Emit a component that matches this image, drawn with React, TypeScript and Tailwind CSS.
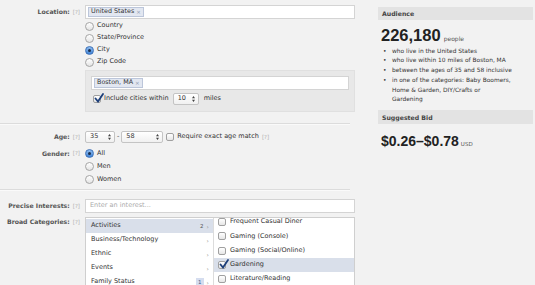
import React from "react";

const Help = () => <span className="ml-[3px] text-[5.5px] font-normal text-[#b0b0b0]">[?]</span>;

function Label({ text, className = "" }: { text: string; className?: string }) {
  return (
    <div className={`w-[85px] shrink-0 pr-[5px] flex justify-end items-center text-[6.2px] font-bold text-[#555] ${className}`}>
      {text}
      <Help />
    </div>
  );
}

function Radio({ checked = false }: { checked?: boolean }) {
  if (checked) {
    return (
      <span className="w-[9px] h-[9px] rounded-full border border-[#3f72b8] bg-linear-to-b from-[#8fbdf0] to-[#3f83d6] flex items-center justify-center shrink-0">
        <span className="w-[3px] h-[3px] rounded-full bg-[#1c2f4d]" />
      </span>
    );
  }
  return <span className="w-[9px] h-[9px] rounded-full border border-[#a5a5a5] bg-linear-to-b from-white to-[#e4e4e4] shrink-0" />;
}

function Checkbox({ checked = false }: { checked?: boolean }) {
  return (
    <span className="relative inline-block w-[8px] h-[8px] rounded-[2px] border border-[#a0a0a0] bg-linear-to-b from-white to-[#e6e6e6] shrink-0">
      {checked && (
        <svg viewBox="0 0 10 10" className="absolute -top-[3px] left-0 w-[10px] h-[10px]">
          <path d="M1.5 5.5 L4 8.5 L9 1" fill="none" stroke="#1d3f7a" strokeWidth="1.8" strokeLinecap="round" />
        </svg>
      )}
    </span>
  );
}

function Select({ value, width }: { value: string; width: string }) {
  return (
    <span className={`${width} h-[12px] rounded-[2px] border border-[#c4c4c4] bg-linear-to-b from-white to-[#f0f0f0] flex items-center justify-between pl-[4px] pr-[3px] text-[6.5px] text-[#333]`}>
      {value}
      <svg viewBox="0 0 4 8" className="w-[3px] h-[6px]">
        <path d="M0 3 L2 0 L4 3 Z M0 5 L2 8 L4 5 Z" fill="#444" />
      </svg>
    </span>
  );
}

function Token({ text }: { text: string }) {
  return (
    <span className="h-[10px] px-[2px] flex items-center bg-[#e2e7f1] border border-[#bcc6da] text-[6.4px] text-[#333]">
      {text}
      <span className="ml-[2px] text-[#8894ad] text-[5.5px]">×</span>
    </span>
  );
}

function Separator() {
  return (
    <div className="w-[350px]">
      <div className="h-px bg-[#dcdcdc]" />
      <div className="h-px bg-[#fafafa]" />
    </div>
  );
}

const categories = [
  { name: "Activities", count: "2", active: true },
  { name: "Business/Technology" },
  { name: "Ethnic" },
  { name: "Events" },
  { name: "Family Status", count: "1", badge: true },
];

const interests = [
  { name: "Frequent Casual Diner" },
  { name: "Gaming (Console)" },
  { name: "Gaming (Social/Online)" },
  { name: "Gardening", checked: true },
  { name: "Literature/Reading" },
];

const audience = [
  "who live in the United States",
  "who live within 10 miles of Boston, MA",
  "between the ages of 35 and 58 inclusive",
  "in one of the categories: Baby Boomers,\nHome & Garden, DIY/Crafts or\nGardening",
];

export default function App() {
  return (
    <div className="w-[535px] h-[285px] overflow-hidden bg-[#f2f2f2] flex font-['DejaVu_Sans',sans-serif] text-[6.5px] text-[#333]">
      <div className="w-[378px] shrink-0 pt-[5px]">
        {/* location */}
        <div className="flex">
          <Label text="Location:" className="h-[14px]" />
          <div className="w-[270px]">
            <div className="h-[14px] bg-white border border-[#d4d4d4] flex items-center px-[2px]">
              <Token text="United States" />
            </div>
            <div className="mt-[1px]">
              {["Country", "State/Province", "City", "Zip Code"].map((r) => (
                <div key={r} className="h-[12px] flex items-center gap-[3px]">
                  <Radio checked={r === "City"} />
                  {r}
                </div>
              ))}
            </div>
            <div className="mt-[2px] h-[42px] bg-[#e8e8e8] border border-[#e0e0e0] px-[5px] pt-[5px]">
              <div className="h-[14px] bg-white border border-[#d4d4d4] flex items-center px-[2px]">
                <Token text="Boston, MA" />
              </div>
              <div className="mt-[3px] h-[12px] flex items-center gap-[3px] pl-[2px]">
                <Checkbox checked />
                <span className="mr-[1px]">Include cities within</span>
                <Select value="10" width="w-[26px]" />
                <span className="ml-[2px]">miles</span>
              </div>
            </div>
          </div>
        </div>

        <div className="mt-[11px]">
          <Separator />
        </div>

        {/* age & gender */}
        <div className="mt-[6px] flex h-[12px]">
          <Label text="Age:" />
          <div className="flex items-center">
            <Select value="35" width="w-[30px]" />
            <span className="mx-[2px]">-</span>
            <Select value="58" width="w-[42px]" />
            <span className="ml-[3px] mr-[3px] flex items-center">
              <Checkbox />
            </span>
            Require exact age match
            <Help />
          </div>
        </div>
        <div className="mt-[4px] flex">
          <Label text="Gender:" className="h-[13px] self-start" />
          <div>
            {["All", "Men", "Women"].map((g) => (
              <div key={g} className="h-[13px] flex items-center gap-[3px]">
                <Radio checked={g === "All"} />
                {g}
              </div>
            ))}
          </div>
        </div>

        <div className="mt-[3px]">
          <Separator />
        </div>

        {/* interests */}
        <div className="mt-[8px] flex">
          <Label text="Precise Interests:" className="h-[14px]" />
          <div className="w-[270px] h-[14px] bg-white border border-[#d4d4d4] flex items-center px-[4px] text-[#aaa]">
            Enter an interest...
          </div>
        </div>
        <div className="mt-[4px] flex">
          <Label text="Broad Categories:" className="h-[10px] self-start" />
          <div className="w-[270px] h-[80px] bg-white border border-[#cfcfcf] flex overflow-hidden">
            <div className="w-[127px] shrink-0 pt-[1px]">
              {categories.map((c) => (
                <div
                  key={c.name}
                  className={`h-[14px] flex items-center pl-[5px] pr-[4px] ${c.active ? "bg-[#d9dfea]" : ""}`}
                >
                  <span className="flex-1">{c.name}</span>
                  {c.count && (
                    <span className={`mr-[3px] text-[5.5px] ${c.badge ? "bg-[#d5ddef] text-[#4a5f8c] px-[2px]" : "text-[#555]"}`}>
                      {c.count}
                    </span>
                  )}
                  <span className="text-[#888] text-[6px]">›</span>
                </div>
              ))}
            </div>
            <div className="flex-1 border-l border-[#dcdcdc] overflow-hidden">
              <div className="-mt-[3px]">
                {interests.map((i) => (
                  <div
                    key={i.name}
                    className={`h-[14.25px] flex items-center gap-[4px] pl-[4px] ${i.checked ? "bg-[#d9dfea]" : ""}`}
                  >
                    <Checkbox checked={i.checked} />
                    {i.name}
                  </div>
                ))}
              </div>
            </div>
          </div>
        </div>
      </div>

      {/* summary */}
      <div className="w-[155px] shrink-0 pt-[7px]">
        <div className="h-[13px] bg-[#e3e3e3] flex items-center px-[4px] text-[6.2px] font-bold text-[#444]">Audience</div>
        <div className="mt-[7px] pl-[3px] flex items-baseline font-['Liberation_Sans',sans-serif] leading-none">
          <span className="text-[16.5px] font-bold text-[#222]">226,180</span>
          <span className="ml-[3px] text-[6px] text-[#555] font-['DejaVu_Sans',sans-serif]">people</span>
        </div>
        <ul className="mt-[3px] pl-[5px] text-[5.9px] leading-[9.8px] text-[#333]">
          {audience.map((a) => (
            <li key={a} className="flex">
              <span className="w-[9px] shrink-0">•</span>
              <span className="whitespace-pre-line">{a}</span>
            </li>
          ))}
        </ul>
        <div className="mt-[5px] h-[14px] bg-[#e3e3e3] flex items-center px-[4px] text-[6.2px] font-bold text-[#444]">
          Suggested Bid
        </div>
        <div className="mt-[10px] pl-[3px] flex items-baseline font-['Liberation_Sans',sans-serif] leading-none">
          <span className="text-[14px] font-bold text-[#222]">$0.26–$0.78</span>
          <span className="ml-[2px] text-[5.5px] text-[#555] font-['DejaVu_Sans',sans-serif]">USD</span>
        </div>
      </div>
    </div>
  );
}
